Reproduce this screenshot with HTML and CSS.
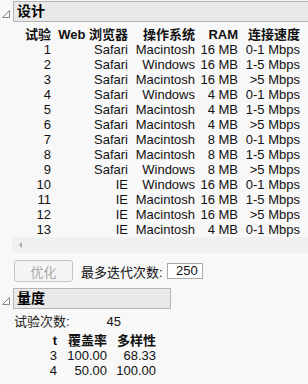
FILE: index.html
```html
<!DOCTYPE html>
<html lang="zh">
<head>
    <meta charset="UTF-8">
    <title>设计</title>
    <link rel="stylesheet" href="styles.css">
</head>
<body>
<div class="panel">
    <div class="outline">
        <svg class="tri" width="10" height="10" viewBox="0 0 10 10"><path d="M1.5 8.5 L8.5 1.5 L8.5 8.5 Z" fill="none" stroke="#8a8a8a" stroke-width="1"/></svg>
        <div class="bar wide">设计</div>
    </div>
    <div class="design">
        <div class="th">试验</div><div class="th">Web 浏览器</div><div class="th">操作系统</div><div class="th">RAM</div><div class="th">连接速度</div>
        <div>1</div><div>Safari</div><div>Macintosh</div><div>16 MB</div><div>0-1 Mbps</div>
        <div>2</div><div>Safari</div><div>Windows</div><div>16 MB</div><div>1-5 Mbps</div>
        <div>3</div><div>Safari</div><div>Macintosh</div><div>16 MB</div><div>&gt;5 Mbps</div>
        <div>4</div><div>Safari</div><div>Windows</div><div>4 MB</div><div>0-1 Mbps</div>
        <div>5</div><div>Safari</div><div>Macintosh</div><div>4 MB</div><div>1-5 Mbps</div>
        <div>6</div><div>Safari</div><div>Macintosh</div><div>4 MB</div><div>&gt;5 Mbps</div>
        <div>7</div><div>Safari</div><div>Macintosh</div><div>8 MB</div><div>0-1 Mbps</div>
        <div>8</div><div>Safari</div><div>Macintosh</div><div>8 MB</div><div>1-5 Mbps</div>
        <div>9</div><div>Safari</div><div>Windows</div><div>8 MB</div><div>&gt;5 Mbps</div>
        <div>10</div><div>IE</div><div>Windows</div><div>16 MB</div><div>0-1 Mbps</div>
        <div>11</div><div>IE</div><div>Macintosh</div><div>16 MB</div><div>1-5 Mbps</div>
        <div>12</div><div>IE</div><div>Macintosh</div><div>16 MB</div><div>&gt;5 Mbps</div>
        <div>13</div><div>IE</div><div>Macintosh</div><div>4 MB</div><div>0-1 Mbps</div>
    </div>
    <div class="hscroll"><span class="arrow"></span></div>
    <div class="controls">
        <button class="btn" disabled>优化</button>
        <span class="label">最多迭代次数:</span>
        <div class="field">250</div>
    </div>
    <div class="outline">
        <svg class="tri" width="10" height="10" viewBox="0 0 10 10"><path d="M1.5 8.5 L8.5 1.5 L8.5 8.5 Z" fill="none" stroke="#8a8a8a" stroke-width="1"/></svg>
        <div class="bar short">量度</div>
    </div>
    <div class="runs">
        <span class="runs-label">试验次数:</span>
        <span class="runs-value">45</span>
    </div>
    <div class="metrics">
        <div class="th">t</div><div class="th">覆盖率</div><div class="th">多样性</div>
        <div>3</div><div>100.00</div><div>68.33</div>
        <div>4</div><div>50.00</div><div>100.00</div>
    </div>
</div>
</body>
</html>
```

FILE: styles.css
```css
body{
    margin: 0;
    background: #f8f8f8;
    font-family: "Liberation Sans", "Noto Sans CJK SC", sans-serif;
    font-size: 13px;
    color: #111;
}
.panel{
    width: 308px;
    height: 384px;
    overflow: hidden;
}
.outline{
    display: flex;
    align-items: flex-end;
    padding-top: 1px;
}
.tri{
    width: 10px;
    height: 10px;
    margin: 0 2px 3px 1px;
    flex-shrink: 0;
}
.bar{
    height: 19px;
    line-height: 19px;
    padding-left: 3px;
    background: #e9e9e9;
    border: 1px solid #b4b4b4;
    font-size: 14px;
    font-weight: bold;
    color: #000;
}
.bar.wide{
    flex-grow: 1;
    border-right: none;
}
.bar.short{
    width: 153px;
}
.design{
    display: grid;
    grid-template-columns: 51px 77px 67px 43px 62px;
    grid-auto-rows: 15px;
    margin-top: 5px;
    line-height: 15px;
    text-align: right;
    white-space: nowrap;
}
.th{
    font-weight: bold;
}
.hscroll{
    margin-left: 12px;
    height: 16px;
    background: #f0f0f0;
    display: flex;
    align-items: center;
}
.arrow{
    margin-left: 7px;
    width: 0;
    height: 0;
    border-top: 3px solid transparent;
    border-bottom: 3px solid transparent;
    border-right: 3px solid #a6a6a6;
}
.controls{
    display: flex;
    align-items: center;
    margin: 7px 0 5px 14px;
}
.btn{
    width: 59px;
    height: 22px;
    border: 1px solid #c4c4c4;
    border-radius: 3px;
    background: #f5f5f5;
    color: #a8a8a8;
    font-family: inherit;
    font-size: 13px;
    padding: 0;
}
.label{
    margin-left: 8px;
}
.field{
    margin-left: 4px;
    width: 30px;
    height: 14px;
    line-height: 14px;
    padding-right: 4px;
    border: 1px solid #a8a8a8;
    background: #fff;
    text-align: right;
}
.runs{
    display: flex;
    margin: 5px 0 0 14px;
    line-height: 15px;
}
.runs-label{
    width: 80px;
    color: #222;
}
.runs-value{
    width: 27px;
    text-align: right;
}
.metrics{
    display: grid;
    grid-template-columns: 57px 50px 49px;
    grid-auto-rows: 15px;
    margin-top: 4px;
    line-height: 15px;
    text-align: right;
}
```
